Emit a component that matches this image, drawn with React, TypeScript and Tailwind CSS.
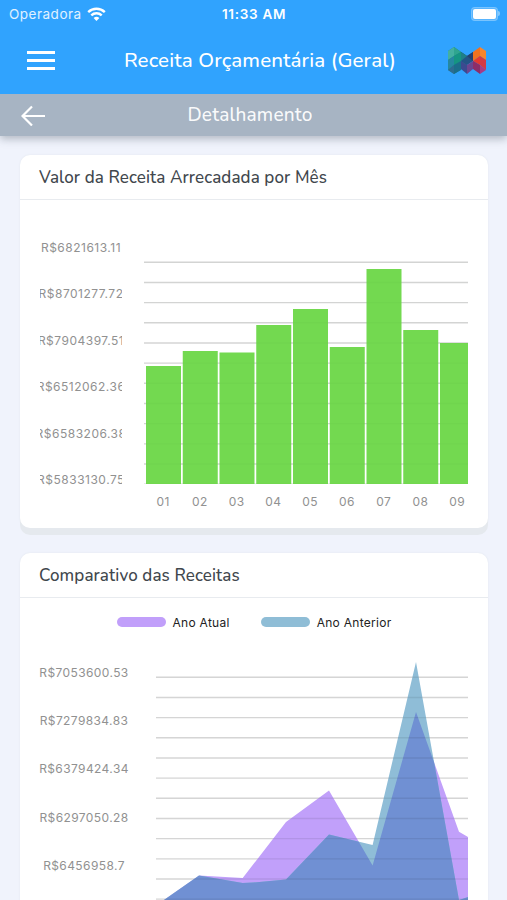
import type { ReactNode } from 'react';
import clsx from 'clsx';

const bars = [
  { month: '01', height: 118 },
  { month: '02', height: 133 },
  { month: '03', height: 131.5 },
  { month: '04', height: 159 },
  { month: '05', height: 175 },
  { month: '06', height: 137 },
  { month: '07', height: 215 },
  { month: '08', height: 154 },
  { month: '09', height: 141 },
];

const barLabels = [
  'R$6821613.11',
  'R$8701277.72',
  'R$7904397.51',
  'R$6512062.36',
  'R$6583206.38',
  'R$5833130.75',
];

const areaLabels = [
  'R$7053600.53',
  'R$7279834.83',
  'R$6379424.34',
  'R$6297050.28',
  'R$6456958.7',
];

const currentYear = '5,242 43,215.5 86.7,218 130,162 173,130.5 216.6,205.5 260,52 303,171.7 312,177 312,242';
const previousYear = '5,242 43,215.5 86.7,223 97,222.5 130,219.5 173,174.5 216.6,185 260,2 303,240 312,237 312,242';

function Logo() {
  return (
    <svg width="38" height="28" viewBox="0 0 38 28">
      <polygon points="0,5 6,1 19,10 19,20 14,23 6,28 0,24" fill="#1d7f92" />
      <polygon points="0,5 6,1 6,10 0,14" fill="#43b0a0" />
      <polygon points="6,1 13,6 6,10" fill="#2fa58f" />
      <polygon points="6,10 13,6 13,15 6,19" fill="#159582" />
      <polygon points="0,14 6,10 6,19 0,24" fill="#2588a0" />
      <polygon points="0,24 6,19 6,28" fill="#2d6c91" />
      <polygon points="6,19 13,15 13,24 6,28" fill="#1b6e8a" />
      <polygon points="13,6 19,10 25,6 25,15 19,19 13,15" fill="#235487" />
      <polygon points="13,6 19,10 13,15" fill="#1f7f88" />
      <polygon points="13,15 19,19 19,28 13,23" fill="#3b4a90" />
      <polygon points="19,10 25,6 25,15" fill="#26406f" />
      <polygon points="19,19 25,15 31,19 25,23 19,28" fill="#6b4590" />
      <polygon points="25,6 32,1 32,10 25,15" fill="#f1721f" />
      <polygon points="32,1 38,5 38,14 32,10" fill="#f8852c" />
      <polygon points="25,15 32,10 32,19" fill="#e5392f" />
      <polygon points="32,10 38,14 38,24 32,19" fill="#d33a45" />
      <polygon points="25,15 32,19 32,28 25,23" fill="#8d2d68" />
      <polygon points="32,19 38,24 32,28" fill="#a83a86" />
    </svg>
  );
}

function StatusBar() {
  return (
    <div className="grid grid-cols-3 items-center h-7 px-[9px] font-['Inter',sans-serif] text-white">
      <div className="flex items-center gap-[5px]">
        <span className="text-[13.5px] tracking-[0.5px] text-white/85">Operadora</span>
        <svg width="19" height="15" viewBox="0 0 19 15" fill="none" stroke="#fff" strokeWidth="2.4">
          <path d="M1.2 5.1a12 12 0 0 1 16.6 0" />
          <path d="M4.3 8.4a7.5 7.5 0 0 1 10.4 0" />
          <path d="M9.5 14 6.6 11.1a4.1 4.1 0 0 1 5.8 0z" fill="#fff" stroke="none" />
        </svg>
      </div>
      <span className="pl-px text-center text-[13.5px] font-semibold tracking-[0.7px]">11:33 AM</span>
      <div className="flex items-center justify-end -mr-[2px] -mt-px">
        <div className="w-[27px] h-[14px] rounded-[4px] border border-white/20 bg-white/20 p-px">
          <div className="h-full rounded-[2px] bg-white" />
        </div>
        <div className="w-[2px] h-[5px] rounded-r-full bg-white/40" />
      </div>
    </div>
  );
}

function Card({ title, className, children }: { title: string; className?: string; children: ReactNode }) {
  return (
    <section className={clsx('mx-5 w-[468px] rounded-[10px] bg-white shadow-[0_7px_0_#e5e9ee,0_0_2px_#dfe5ec]', className)}>
      <h2 className="h-[45px] pl-[19px] leading-[45px] border-b border-[#e8ebef] font-['Nunito','Lato',sans-serif] font-medium text-[17px] tracking-[0.1px] text-[#41474d]">
        {title}
      </h2>
      {children}
    </section>
  );
}

function GridLines({ width, color }: { width: number; color: string }) {
  return (
    <g stroke={color} strokeWidth="1.4">
      {Array.from({ length: 12 }, (_, i) => (
        <line key={i} x1="0" x2={width} y1={17.3 + i * 20.17} y2={17.3 + i * 20.17} />
      ))}
    </g>
  );
}

function BarChart() {
  return (
    <div className="flex pl-5 pt-[37px]">
      <div className="w-[82px] h-[253.5px] pt-[0.5px] flex flex-col justify-between overflow-hidden">
        {barLabels.map((label) => (
          <span key={label} className="h-5 flex justify-center items-center whitespace-nowrap font-['Inter',sans-serif] text-[12px] tracking-[0.5px] text-[#919191]">
            {label}
          </span>
        ))}
      </div>
      <div className="ml-[22px] mt-2">
        <svg width="324" height="239" viewBox="0 0 324 239">
          <GridLines width={324} color="#d8d8d8" />
          {bars.map((bar, i) => (
            <rect key={bar.month} x={2 + i * 36.75} y={239 - bar.height} width={i === 8 ? 28 : 35} height={bar.height} fill="#73d950" />
          ))}
          <GridLines width={324} color="rgba(0,60,0,0.02)" />
        </svg>
        <div className="flex h-[34px] font-['Inter',sans-serif] text-[12px] tracking-[0.4px] text-[#919191]">
          {bars.map((bar) => (
            <span key={bar.month} className="w-[36.75px] shrink-0 pl-[1.5px] text-center leading-[35px]">{bar.month}</span>
          ))}
        </div>
      </div>
    </div>
  );
}

function Legend() {
  return (
    <div className="flex justify-center gap-[31px] pt-[14px] font-['Inter',sans-serif] text-[12px] leading-[21px] h-[34px] tracking-[0.28px] text-[#222]">
      <span className="flex items-center gap-[7px]">
        <i className="w-[49px] h-[10px] rounded-full bg-[#c19ffa]" />
        Ano Atual
      </span>
      <span className="flex items-center gap-[7px]">
        <i className="w-[49px] h-[10px] rounded-full bg-[#8fbdd6]" />
        Ano Anterior
      </span>
    </div>
  );
}

function AreaChart() {
  return (
    <div className="flex pl-[19px] pt-[28px]">
      <div className="w-[90px] flex flex-col gap-[28.4px] pt-[2.7px]">
        {areaLabels.map((label) => (
          <span key={label} className="h-5 flex justify-center items-center whitespace-nowrap font-['Inter',sans-serif] text-[12px] tracking-[0.4px] text-[#919191]">
            {label}
          </span>
        ))}
      </div>
      <svg className="ml-[27px]" width="312" height="242" viewBox="0 0 312 242">
        <clipPath id="current-year">
          <polygon points={currentYear} />
        </clipPath>
        <GridLines width={312} color="#e8e8e8" />
        <polygon points={currentYear} fill="#c1a0fa" />
        <polygon points={previousYear} fill="#8fbdd7" />
        <polygon points={previousYear} fill="#7090d3" clipPath="url(#current-year)" />
        <GridLines width={312} color="rgba(0,0,0,0.08)" />
      </svg>
    </div>
  );
}

export default function App() {
  return (
    <div className="w-[507px] h-[900px] overflow-hidden bg-[#f0f3fc]">
      <header className="h-[136px] bg-[#30a3fe] shadow-[0_3px_8px_rgba(60,75,90,0.35)]">
        <StatusBar />
        <div className="flex items-center h-[66px] pl-[27px] pr-[21px] pb-[2px]">
          <div className="flex flex-col gap-[5px] w-7">
            <i className="h-[3px] bg-white" />
            <i className="h-[3px] bg-white" />
            <i className="h-[3px] bg-white" />
          </div>
          <h1 className="flex-1 pl-[17px] whitespace-nowrap text-center font-['Nunito','Lato',sans-serif] font-medium text-[20.5px] tracking-[0.14px] text-white">
            Receita Orçamentária (Geral)
          </h1>
          <Logo />
        </div>
        <div className="flex items-center h-[42px] bg-[#a7b4c3] px-[21px]">
          <svg width="25" height="21" viewBox="0 0 25 21" fill="none" stroke="#fff" strokeWidth="2.2">
            <path d="M24 11H1.5M11 1.5 1.5 11l9.5 9.5" />
          </svg>
          <span className="flex-1 pr-8 pt-px text-center font-['Nunito','Lato',sans-serif] font-medium text-[19px] tracking-[0.2px] text-white/95">
            Detalhamento
          </span>
        </div>
      </header>
      <Card title="Valor da Receita Arrecadada por Mês" className="mt-[19px] h-[373px]">
        <BarChart />
      </Card>
      <Card title="Comparativo das Receitas" className="mt-[25px] h-[420px]">
        <Legend />
        <AreaChart />
      </Card>
    </div>
  );
}
